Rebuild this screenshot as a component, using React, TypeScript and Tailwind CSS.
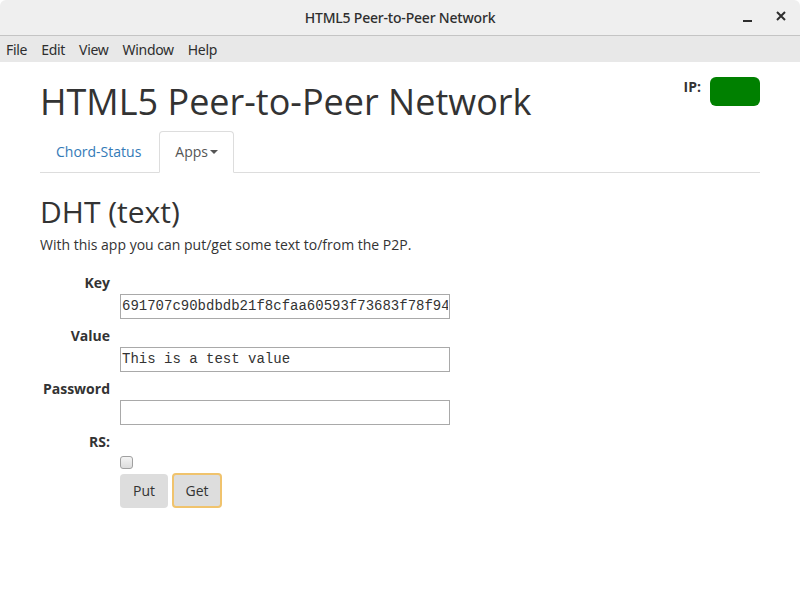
import { useState } from "react";

const fields = [
  { label: "Key", value: "691707c90bdbdb21f8cfaa60593f73683f78f94", type: "text" },
  { label: "Value", value: "This is a test value", type: "text" },
  { label: "Password", value: "", type: "password" },
];

const menu = ["File", "Edit", "View", "Window", "Help"];

export default function App() {
  const [rs, setRs] = useState(false);

  return (
    <div className="w-[800px] h-[600px] bg-white flex flex-col overflow-hidden font-['Open_Sans','Noto_Sans',sans-serif] text-[#333]">
      {/* window chrome */}
      <div className="h-[36px] shrink-0 bg-[#efefef] border-b border-[#c4c4c4] rounded-t-[6px] flex items-center relative font-['Noto_Sans',sans-serif]">
        <div className="flex-1 text-center text-[14px] font-medium text-[#2e2e2e] tracking-[-0.2px]">
          HTML5 Peer-to-Peer Network
        </div>
        <div className="absolute right-[14px] top-[10px] flex items-center gap-[24px] text-[#2e2e2e]">
          <div className="w-[9px] h-[2px] bg-[#2e2e2e] mt-[10px]" />
          <svg width="10" height="10" viewBox="0 0 10 10">
            <path d="M1 1 L9 9 M9 1 L1 9" stroke="#2e2e2e" strokeWidth="2" />
          </svg>
        </div>
      </div>
      <div className="h-[26px] shrink-0 bg-[#e8e8e8] flex items-center pl-[6px] gap-[14px] text-[14px] text-[#2e2e2e] font-['Noto_Sans',sans-serif] tracking-[-0.3px]">
        {menu.map((m) => (
          <span key={m}>{m}</span>
        ))}
      </div>

      {/* page */}
      <div className="flex-1 px-[40px]">
        <div className="flex justify-between items-start">
          <h1 className="text-[36px] leading-[1.1] mt-[20px] font-normal">HTML5 Peer-to-Peer Network</h1>
          <div className="flex items-start gap-[9px] mt-[15px]">
            <span className="text-[14px] font-bold leading-[20px]">IP:</span>
            <div className="w-[50px] h-[29px] rounded-[6px] bg-[#008000]" />
          </div>
        </div>

        <ul className="flex mt-[9px] border-b border-[#ddd] text-[14px]">
          <li className="-mb-px">
            <a className="block px-[15px] py-[10px] leading-[20px] text-[#337ab7] border border-transparent">
              Chord-Status
            </a>
          </li>
          <li className="-mb-px ml-[2px]">
            <a className="flex items-center px-[15px] py-[10px] leading-[20px] text-[#555] bg-white border border-[#ddd] border-b-transparent rounded-t-[4px]">
              Apps
              <span className="ml-[2px] w-0 h-0 border-x-[4px] border-x-transparent border-t-[4px] border-t-[#555]" />
            </a>
          </li>
        </ul>

        <h2 className="text-[30px] leading-[1.1] mt-[22px] font-normal">DHT (text)</h2>
        <p className="text-[14px] leading-[20px] mt-[7px]">With this app you can put/get some text to/from the P2P.</p>

        <form className="mt-[18px] text-[14px]" onSubmit={(e) => e.preventDefault()}>
          {fields.map((f) => (
            <div key={f.label} className="mb-[7px]">
              <label className="block w-[70px] text-right font-bold leading-[20px]">{f.label}</label>
              <input
                type={f.type}
                defaultValue={f.value}
                className="block ml-[80px] mt-px w-[330px] h-[25px] border border-[#a9a9a9] px-[1px] font-['Liberation_Mono',monospace] text-[14px] text-[#333] outline-none"
              />
            </div>
          ))}
          <label className="block w-[70px] text-right font-bold leading-[20px]">RS:</label>
          <div className="ml-[80px] mt-[4px]">
            <input
              type="checkbox"
              checked={rs}
              onChange={() => setRs(!rs)}
              className="block w-[13px] h-[13px] m-0 appearance-none rounded-[3px] border border-[#a0a0a0] bg-gradient-to-b from-[#f4f4f4] to-[#dcdcdc] checked:bg-[#888]"
            />
            <div className="flex gap-[4px] mt-[5px]">
              <button type="button" className="w-[48px] h-[34px] rounded-[4px] bg-[#ddd] text-[#333] text-[14px]">
                Put
              </button>
              <button type="button" className="w-[50px] h-[35px] -mt-px rounded-[4px] bg-[#ddd] text-[#333] text-[14px] border-2 border-[#f0c36d]">
                Get
              </button>
            </div>
          </div>
        </form>
      </div>
    </div>
  );
}
